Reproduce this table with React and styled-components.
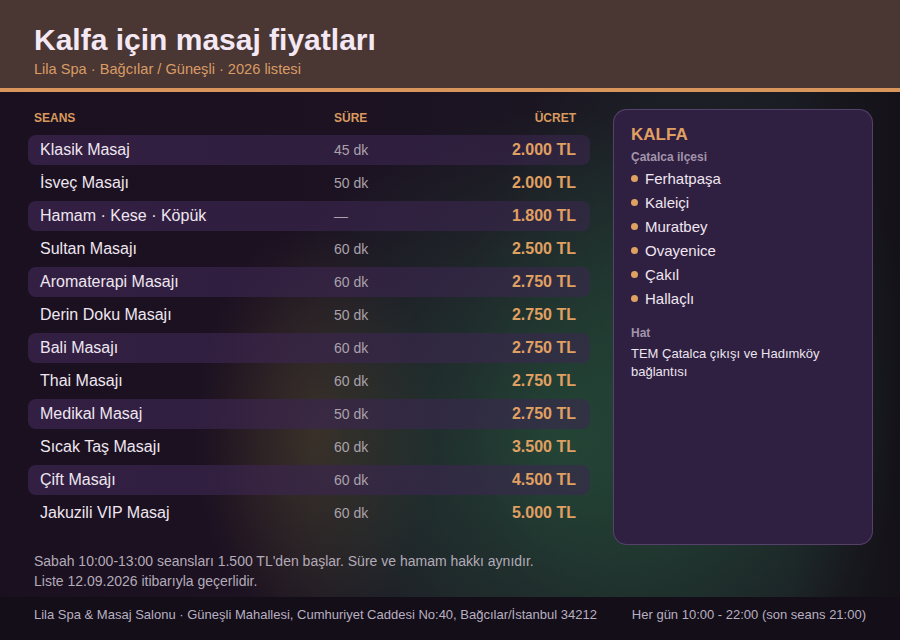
import styled, { createGlobalStyle } from "styled-components";

const GlobalStyle = createGlobalStyle`
  html, body { margin: 0; padding: 0; }
  body {
    width: 900px;
    height: 640px;
    overflow: hidden;
    background: #181020;
    font-family: "Liberation Sans", Arial, sans-serif;
  }
`;

const Page = styled.div`
  width: 900px;
  height: 640px;
  display: flex;
  flex-direction: column;
  background:
    radial-gradient(ellipse 340px 340px at 62% 70%, rgba(40, 92, 64, 0.6), transparent 100%),
    radial-gradient(ellipse 220px 340px at 76% 55%, rgba(36, 84, 60, 0.45), transparent 100%),
    radial-gradient(ellipse 120px 210px at 35% 68%, rgba(110, 72, 40, 0.4), transparent 100%),
    linear-gradient(90deg, #1a1020 0%, #1c1222 40%, #1a1a22 88%, #141218 100%);
`;

const Header = styled.header`
  background: #4a3633;
  border-bottom: 4px solid #d9965c;
  padding: 22px 34px 0;
  height: 66px;
`;

const Title = styled.h1`
  margin: 0;
  font-size: 30px;
  line-height: 36px;
  font-weight: 700;
  color: #f4e8f4;
`;

const Subtitle = styled.div`
  margin-top: 1px;
  font-size: 14.6px;
  line-height: 20px;
  color: #d99c66;
`;

const Main = styled.main`
  flex: 1;
  padding: 17px 28px 0;
  display: grid;
  grid-template-columns: 562px 260px;
  column-gap: 23px;
  align-items: start;
`;

const TableArea = styled.section`
  display: flex;
  flex-direction: column;
`;

const Row = styled.div`
  display: grid;
  grid-template-columns: 294px 1fr 120px;
  align-items: center;
  height: ${(p) => (p.$head ? "18px" : "30px")};
  margin-bottom: ${(p) => (p.$head ? "8px" : "3px")};
  padding: 0 14px 0 12px;
  border-radius: 8px;
  background: ${(p) =>
    p.$striped
      ? "linear-gradient(90deg, rgba(58, 36, 78, 0.75), rgba(60, 38, 80, 0.55))"
      : "transparent"};
`;

const HeadCell = styled.div`
  font-size: 12px;
  font-weight: 700;
  color: #d99a5e;
  text-align: ${(p) => (p.$right ? "right" : "left")};
  margin-left: ${(p) => (p.$first ? "-6px" : "0")};
`;

const Name = styled.div`
  font-size: 16px;
  color: #efe6f0;
`;

const Duration = styled.div`
  font-size: 14px;
  color: #aaa2ac;
`;

const Price = styled.div`
  font-size: 16px;
  font-weight: 700;
  color: #e0a062;
  text-align: right;
`;

const Notes = styled.div`
  margin-top: 20px;
  padding-left: 6px;
  font-size: 14px;
  line-height: 20px;
  color: #b3abb8;
`;

const Card = styled.aside`
  height: 436px;
  box-sizing: border-box;
  background: #2f1f40;
  border: 1px solid rgba(160, 130, 190, 0.35);
  border-radius: 14px;
  padding: 14px 17px;
`;

const CardTitle = styled.div`
  font-size: 17px;
  font-weight: 700;
  color: #e0a062;
  line-height: 22px;
`;

const Label = styled.div`
  font-size: 12px;
  font-weight: 700;
  color: #a394ab;
  line-height: 16px;
  margin-top: ${(p) => p.$gap || "0"};
`;

const List = styled.ul`
  list-style: none;
  margin: 1px 0 0;
  padding: 0;
`;

const Item = styled.li`
  display: flex;
  align-items: center;
  gap: 7px;
  height: 24px;
  font-size: 15px;
  color: #efe6f0;
`;

const Dot = styled.span`
  width: 7px;
  height: 7px;
  border-radius: 50%;
  background: #e0a062;
  flex-shrink: 0;
`;

const LineText = styled.div`
  margin-top: 4px;
  font-size: 13px;
  line-height: 18px;
  color: #ece4ee;
`;

const Footer = styled.footer`
  height: 43px;
  box-sizing: border-box;
  padding: 8px 34px 0;
  background: #140e19;
  display: flex;
  justify-content: space-between;
  font-size: 13px;
  line-height: 20px;
  color: #b8b0c0;
`;

const services = [
  ["Klasik Masaj", "45 dk", "2.000 TL"],
  ["İsveç Masajı", "50 dk", "2.000 TL"],
  ["Hamam · Kese · Köpük", "—", "1.800 TL"],
  ["Sultan Masajı", "60 dk", "2.500 TL"],
  ["Aromaterapi Masajı", "60 dk", "2.750 TL"],
  ["Derin Doku Masajı", "50 dk", "2.750 TL"],
  ["Bali Masajı", "60 dk", "2.750 TL"],
  ["Thai Masajı", "60 dk", "2.750 TL"],
  ["Medikal Masaj", "50 dk", "2.750 TL"],
  ["Sıcak Taş Masajı", "60 dk", "3.500 TL"],
  ["Çift Masajı", "60 dk", "4.500 TL"],
  ["Jakuzili VIP Masaj", "60 dk", "5.000 TL"],
];

const districts = ["Ferhatpaşa", "Kaleiçi", "Muratbey", "Ovayenice", "Çakıl", "Hallaçlı"];

export default function App() {
  return (
    <>
      <GlobalStyle />
      <Page>
        <Header>
          <Title>Kalfa için masaj fiyatları</Title>
          <Subtitle>Lila Spa · Bağcılar / Güneşli · 2026 listesi</Subtitle>
        </Header>

        <Main>
          <TableArea>
            <Row $head>
              <HeadCell $first>SEANS</HeadCell>
              <HeadCell>SÜRE</HeadCell>
              <HeadCell $right>ÜCRET</HeadCell>
            </Row>
            {services.map(([name, dur, price], i) => (
              <Row key={name} $striped={i % 2 === 0}>
                <Name>{name}</Name>
                <Duration>{dur}</Duration>
                <Price>{price}</Price>
              </Row>
            ))}
            <Notes>
              Sabah 10:00-13:00 seansları 1.500 TL'den başlar. Süre ve hamam hakkı aynıdır.
              <br />
              Liste 12.09.2026 itibarıyla geçerlidir.
            </Notes>
          </TableArea>

          <Card>
            <CardTitle>KALFA</CardTitle>
            <Label $gap="3px">Çatalca ilçesi</Label>
            <List>
              {districts.map((d) => (
                <Item key={d}>
                  <Dot />
                  {d}
                </Item>
              ))}
            </List>
            <Label $gap="15px">Hat</Label>
            <LineText>TEM Çatalca çıkışı ve Hadımköy bağlantısı</LineText>
          </Card>
        </Main>

        <Footer>
          <span>Lila Spa &amp; Masaj Salonu · Güneşli Mahallesi, Cumhuriyet Caddesi No:40, Bağcılar/İstanbul 34212</span>
          <span>Her gün 10:00 - 22:00 (son seans 21:00)</span>
        </Footer>
      </Page>
    </>
  );
}
